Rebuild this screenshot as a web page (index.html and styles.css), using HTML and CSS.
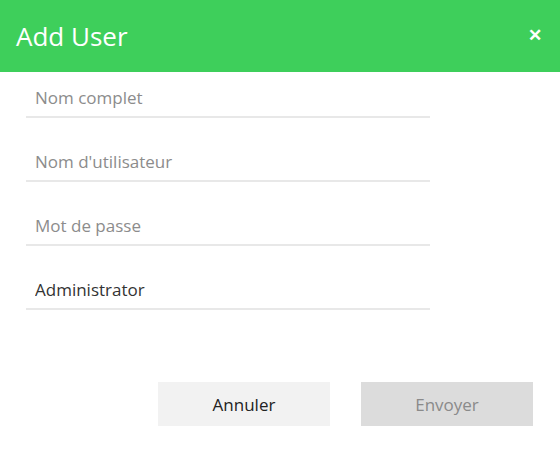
FILE: index.html
```html
<!DOCTYPE html>
<html lang="fr">
<head>
  <meta charset="UTF-8">
  <title>Add User</title>
  <link rel="stylesheet" href="styles.css">
</head>
<body>

  <div class="modal">
    <div class="modal-header">
      <h1>Add User</h1>
      <span class="close">&#x2715;</span>
    </div>

    <form class="form">
      <input class="field" type="text" placeholder="Nom complet">
      <input class="field" type="text" placeholder="Nom d'utilisateur">
      <input class="field" type="password" placeholder="Mot de passe">
      <input class="field" type="text" value="Administrator">

      <div class="actions">
        <button type="button" class="btn btn-cancel">Annuler</button>
        <button type="submit" class="btn btn-send" disabled>Envoyer</button>
      </div>
    </form>
  </div>

</body>
</html>
```

FILE: styles.css
```css
body {
  margin: 0;
  font-family: 'Open Sans', sans-serif;
  background: white;
}

.modal-header {
  height: 72px;
  background: #3ecf5b;
  color: white;
  display: flex;
  align-items: center;
  justify-content: space-between;
  padding: 0 16px;
}

.modal-header h1 {
  margin: 0;
  font-size: 26px;
  font-weight: 400;
}

.close {
  font-size: 17px;
  font-weight: bold;
  margin-right: 2px;
  margin-top: -4px;
}

.form {
  display: flex;
  flex-direction: column;
  padding: 0 0 0 26px;
}

.field {
  width: 404px;
  height: 46px;
  box-sizing: border-box;
  border: none;
  border-bottom: 2px solid #e8e8e8;
  padding: 7px 9px 0;
  margin-bottom: 18px;
  font-family: inherit;
  font-size: 17px;
  color: #333;
  outline: none;
}

.field::placeholder {
  color: #8c8c8c;
}

.actions {
  display: flex;
  justify-content: flex-end;
  gap: 31px;
  margin-top: 54px;
  padding-right: 27px;
}

.btn {
  width: 172px;
  height: 44px;
  border: none;
  font-family: inherit;
  font-size: 17px;
}

.btn-cancel {
  background: #f2f2f2;
  color: #222;
}

.btn-send {
  background: #dcdcdc;
  color: #8a8a8a;
}
```
